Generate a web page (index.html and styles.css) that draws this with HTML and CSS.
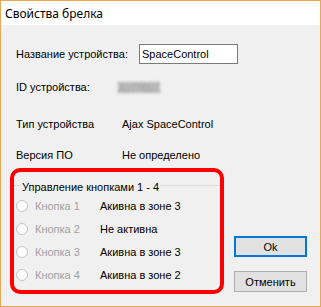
FILE: index.html
```html
<!DOCTYPE html>
<html lang="ru">
<head>
  <meta charset="UTF-8" />
  <title>Свойства брелка</title>
  <link rel="stylesheet" href="styles.css">
</head>
<body>
  <div class="window">
    <div class="titlebar">Свойства брелка</div>
    <div class="content">
      <div class="row row-name">
        <span class="label label-name">Название устройства:</span>
        <input class="text-input" type="text" value="SpaceControl" />
      </div>
      <div class="row row-id">
        <span class="label label-id">ID устройства:</span>
        <span class="blurred"></span>
      </div>
      <div class="row row-type">
        <span class="label">Тип устройства</span>
        <span>Ajax SpaceControl</span>
      </div>
      <div class="row row-version">
        <span class="label">Версия ПО</span>
        <span>Не определено</span>
      </div>

      <div class="bottom">
        <div class="highlight">
          <div class="legend"><span>Управление кнопками 1 - 4</span></div>
          <div class="radio-row">
            <span class="radio"></span><span class="radio-label">Кнопка 1</span><span>Акивна в зоне 3</span>
          </div>
          <div class="radio-row">
            <span class="radio"></span><span class="radio-label">Кнопка 2</span><span>Не активна</span>
          </div>
          <div class="radio-row">
            <span class="radio"></span><span class="radio-label">Кнопка 3</span><span>Акивна в зоне 3</span>
          </div>
          <div class="radio-row">
            <span class="radio"></span><span class="radio-label">Кнопка 4</span><span>Акивна в зоне 2</span>
          </div>
        </div>
        <div class="buttons">
          <button class="btn btn-default">Ok</button>
          <button class="btn">Отменить</button>
        </div>
      </div>
    </div>
  </div>
</body>
</html>
```

FILE: styles.css
```css
body {
  margin: 0;
  font-family: "Liberation Sans", Arial, sans-serif;
  font-size: 11px;
  color: #000;
}
.window {
  width: 321px;
  height: 307px;
  box-sizing: border-box;
  border: 1px solid #e8a857;
  display: flex;
  flex-direction: column;
  background: #f0f0f0;
}
.titlebar {
  height: 24px;
  line-height: 25px;
  padding-left: 4px;
  background: #fff;
  font-family: "Noto Sans", "Open Sans", sans-serif;
  font-size: 12px;
}
.content {
  flex: 1;
  padding: 19px 0 0 9px;
}
.row {
  display: flex;
  align-items: center;
  height: 20px;
  padding-left: 6px;
}
.row-id { margin-top: 13px; }
.row-type { margin-top: 17px; }
.row-version { margin-top: 11px; }
.label {
  width: 106px;
  flex-shrink: 0;
}
.label-name { width: 123px; }
.label-id { width: 102px; }
.text-input {
  width: 99px;
  height: 20px;
  box-sizing: border-box;
  margin: 0;
  padding: 0 2px;
  border: 1px solid #7a7a7a;
  background: #fff;
  font-family: inherit;
  font-size: 11px;
  color: #000;
  outline: none;
}
/* id is hidden in the screenshot */
.blurred {
  width: 42px;
  height: 11px;
  margin-top: 1px;
  background: repeating-linear-gradient(115deg, #7a7a7a 0 2px, #c8c8c8 2px 4px);
  filter: blur(1.8px);
  opacity: 0.75;
}
.bottom {
  display: flex;
  margin-top: 3px;
}
.highlight {
  width: 214px;
  height: 126px;
  box-sizing: border-box;
  border: 4px solid #ff0000;
  border-radius: 10px;
  padding: 8px 0 0 2px;
}
.legend {
  display: flex;
  height: 14px;
  line-height: 14px;
  margin-left: -2px;
}
.legend::before,
.legend::after {
  content: "";
  height: 1px;
  margin-top: 5px;
  background: #dcdcdc;
}
.legend::before { width: 7px; }
.legend::after { flex: 1; }
.legend span { padding: 0 1px; }
.radio-row {
  display: flex;
  align-items: center;
  height: 23px;
}
.radio {
  width: 12px;
  height: 12px;
  box-sizing: border-box;
  border: 1px solid #c4c4c4;
  border-radius: 50%;
  background: #fcfcfc;
  margin-right: 7px;
}
.radio-label {
  width: 65px;
  color: #a0a0a0;
}
.buttons {
  display: flex;
  flex-direction: column;
  gap: 14px;
  align-self: flex-end;
  margin: 0 0 2px 10px;
}
.btn {
  width: 73px;
  height: 21px;
  margin: 0;
  padding: 0;
  border: 1px solid #adadad;
  background: #e1e1e1;
  font-family: inherit;
  font-size: 11px;
  color: #000;
}
.btn-default {
  border: 2px solid #0078d7;
}
```
